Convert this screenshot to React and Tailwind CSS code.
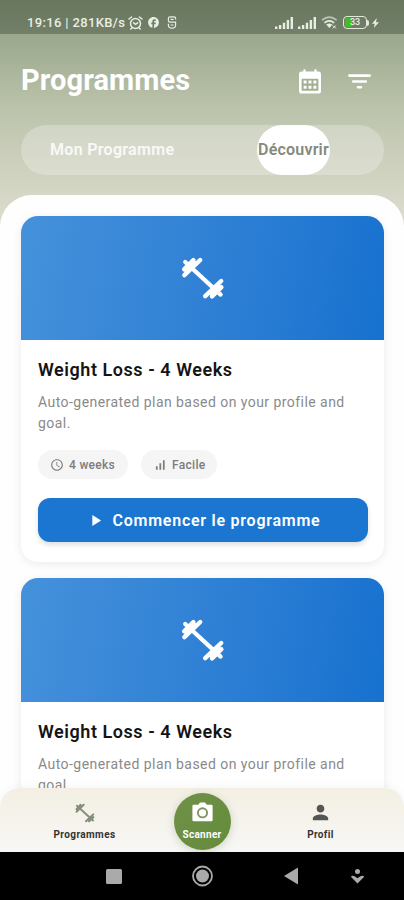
import { MdAccessTime, MdSignalCellularAlt, MdPlayArrow, MdPerson, MdFacebook } from "react-icons/md";

const PROGRAMS = [
  { id: 1, title: "Weight Loss - 4 Weeks", desc: "Auto-generated plan based on your profile and goal.", duration: "4 weeks", level: "Facile" },
  { id: 2, title: "Weight Loss - 4 Weeks", desc: "Auto-generated plan based on your profile and goal.", duration: "4 weeks", level: "Facile" },
];

function Dumbbell({ className }) {
  return (
    <svg viewBox="0 0 44 44" className={className} fill="none" stroke="currentColor" strokeLinecap="round" strokeWidth="4.4">
      <path d="M4.2 6 39.6 38.6" strokeWidth="4.2" />
      <path d="M3.2 13.4 12.4 4M3.4 19.2 19.2 4" />
      <path d="M31 40.4 40.4 31.2M24.2 40.2 40.2 25" />
      <path d="M4.5 13 12 5.5 16.5 6.5 6 17zM39 31.5 31.5 39 27 37.5 37.5 27.5z" fill="currentColor" strokeWidth="1.6" />
    </svg>
  );
}

function CalendarIcon({ className }) {
  return (
    <svg viewBox="0 0 22 25" className={className}>
      <path d="M5.5 1.5V5M16.5 1.5V5" stroke="currentColor" strokeWidth="2.4" strokeLinecap="round" />
      <rect y="2.6" width="22" height="22" rx="2.6" fill="currentColor" />
      <rect x="2.6" y="9.8" width="16.8" height="12" rx="1" fill="#a3ae92" />
      <g fill="currentColor">
        <path d="M4.6 11.4h3v3h-3zM9.5 11.4h3v3h-3zM14.4 11.4h3v3h-3zM4.6 16.8h3v3h-3zM9.5 16.8h3v3h-3zM14.4 16.8h3v3h-3z" />
      </g>
    </svg>
  );
}

function FilterIcon({ className }) {
  return (
    <svg viewBox="0 0 23 15" className={className} stroke="currentColor" strokeWidth="2.6" strokeLinecap="round">
      <path d="M1.4 1.6h20.2M5.2 7.5h12.6M10 13.2h3" />
    </svg>
  );
}

function CameraIcon({ className }) {
  return (
    <svg viewBox="0 0 21 20" className={className} fill="none">
      <path d="M1.6 2.8h4.6L8 .4h5l1.8 2.4h4.6q1.2 0 1.2 1.2v14q0 1.2-1.2 1.2H1.6Q.4 19.2.4 18V4q0-1.2 1.2-1.2z" fill="currentColor" />
      <circle cx="10.5" cy="10.8" r="4.6" stroke="#7d965c" strokeWidth="1.9" />
    </svg>
  );
}

function Signal() {
  return (
    <svg viewBox="0 0 18 12" className="h-3 w-[18px]" fill="currentColor">
      <path d="M0 9.5h2.4V12H0zM3.9 8h2.4v4H3.9zM7.8 5.8h2.4V12H7.8zM11.7 3h2.4v9h-2.4zM15.6 0H18v12h-2.4z" />
    </svg>
  );
}

function StatusBar() {
  return (
    <div className="flex h-[34px] items-center bg-linear-to-b from-[#69775f] to-[#737f68] pt-[11px] pr-[25px] pl-[27px] text-[#e9eee3]">
      <span className="w-[99px] text-[13px] font-medium tracking-[0.35px] whitespace-nowrap">19:16 | 281KB/s</span>
      <svg viewBox="0 0 15 14" className="ml-0.5 h-3.5 w-[15px]" fill="none" stroke="currentColor" strokeWidth="1.5" strokeLinecap="round">
        <circle cx="7.5" cy="7.5" r="5" />
        <path d="M1 3 3.6 1M14 3 11.4 1M5.6 6.8l2 1.6 2-1.6M3.8 12l-1 1M11.2 12l1 1" />
      </svg>
      <MdFacebook className="ml-1 size-[13px]" />
      <svg viewBox="0 0 10 13" className="ml-[7px] h-[13px] w-2.5" fill="none" stroke="currentColor" strokeWidth="1.2">
        <path d="M8.6 3.6V2.4Q8.6.8 6.8.8H3.2Q1.4.8 1.4 2.6v2q0 1.6 1.6 1.6h5.6V9q0 3.2-3.6 3.2T1.4 9V7.8M3.6 3.4h3M3.6 9h3" />
      </svg>
      <div className="ml-auto flex items-center">
        <Signal />
        <span className="ml-[5px] flex"><Signal /></span>
        <svg viewBox="0 0 17 13" className="ml-[5px] h-[13px] w-[17px]" fill="none" stroke="currentColor" strokeWidth="1.6">
          <path d="M1 4.2Q8.2-1.8 15.6 4.2" opacity=".65" />
          <path d="M3.4 6.8Q8.2 2.8 13.2 6.8" />
          <path d="M5.6 8.6 8.4 11.8 11 8.6Q8.3 7 5.6 8.6z" fill="currentColor" strokeWidth=".6" />
          <path d="M11.8 9.4l3 3M14.8 9.4l-3 3" strokeWidth="1" />
        </svg>
        <div className="relative ml-[5px] flex h-[13px] w-6 items-center justify-center overflow-hidden rounded-[4px] border-[1.5px] border-[#e3e9dc]">
          <span className="absolute inset-y-px left-px w-[7px] rounded-l-[2px] bg-[#43bd25]" />
          <span className="relative text-[9px] leading-none font-medium">33</span>
        </div>
        <span className="h-[6px] w-[2px] rounded-r bg-[#e3e9dc]" />
        <svg viewBox="0 0 7 10" className="ml-[3px] h-2.5 w-[7px]" fill="currentColor">
          <path d="M4.8 0 0 5.8h2.8L1.8 10 7 4.2H4z" />
        </svg>
      </div>
    </div>
  );
}

function ProgramCard({ program }) {
  return (
    <article className="shrink-0 overflow-hidden rounded-[17px] bg-white shadow-[0_2px_10px_rgba(0,0,0,0.08)]">
      <div className="flex h-[124px] items-center justify-center bg-linear-100 from-[#4591db] to-[#1671cf]">
        <Dumbbell className="size-11 text-white" />
      </div>
      <div className="pt-[18px] pr-4 pb-5 pl-[17px]">
        <h2 className="text-[18px] leading-6 font-semibold tracking-[0.55px] text-[#141414]">{program.title}</h2>
        <p className="mt-[10px] text-[14px] leading-[20.5px] tracking-[0.45px] text-[#8a8a8a]">{program.desc}</p>
        <div className="mt-[17px] flex gap-[13px]">
          <span className="flex h-[29px] w-[90px] items-center gap-[5px] rounded-full bg-[#f5f5f5] pl-[12px] text-[12px] font-medium tracking-[0.3px] whitespace-nowrap text-[#7c7c7c]">
            <MdAccessTime className="size-3.5 shrink-0" />
            {program.duration}
          </span>
          <span className="flex h-[29px] w-[76px] items-center gap-[5px] rounded-full bg-[#f5f5f5] pl-[12px] text-[12px] font-medium tracking-[0.3px] whitespace-nowrap text-[#7c7c7c]">
            <MdSignalCellularAlt className="size-3.5 shrink-0" />
            {program.level}
          </span>
        </div>
        <button className="mt-[19px] flex h-11 w-full items-center justify-center gap-2 rounded-xl bg-[#1b76d2] pt-px text-[16px] font-semibold tracking-[0.75px] text-white shadow-[0_3px_5px_rgba(0,0,0,0.13)]">
          <MdPlayArrow className="size-[19px]" />
          Commencer le programme
        </button>
      </div>
    </article>
  );
}

function BottomNav() {
  return (
    <nav className="flex h-16 shrink-0 justify-between rounded-t-[20px] bg-linear-to-b from-[#f3efe3] to-[#f7f7f5] px-[34px] text-[10px] font-bold text-[#333] shadow-[0_-2px_8px_rgba(0,0,0,0.04)]">
      <a className="flex w-[101px] flex-col items-center pt-[15px]">
        <Dumbbell className="size-5 text-[#85907a]" />
        <span className="mt-1 leading-[15px] tracking-[0.4px]">Programmes</span>
      </a>
      <a className="mt-[5px] flex size-[57px] flex-col items-center rounded-full bg-linear-to-br from-[#6f9147] to-[#668b3b] pt-[9px] text-white shadow-[0_2px_8px_rgba(60,80,30,0.2)]">
        <CameraIcon className="h-5 w-[21px]" />
        <span className="mt-[5px] leading-[15px] tracking-[0.3px]">Scanner</span>
      </a>
      <a className="flex w-[101px] flex-col items-center pt-[13px] pl-0.5">
        <MdPerson className="size-[23px] text-[#555]" />
        <span className="mt-[3px] leading-[15px] tracking-[0.35px]">Profil</span>
      </a>
    </nav>
  );
}

function SystemNav() {
  return (
    <div className="h-12 shrink-0 bg-black text-[#aaa]">
      <svg viewBox="0 0 404 48" className="h-12 w-[404px]" fill="currentColor">
        <rect x="106" y="17" width="16" height="15" rx="1.5" />
        <circle cx="202.5" cy="24" r="9.5" fill="none" stroke="currentColor" strokeWidth="1.8" />
        <circle cx="202.5" cy="24" r="6.5" />
        <path d="M298 15.5v17L284 24z" />
        <circle cx="357.5" cy="19.5" r="2.5" />
        <path d="M351 24.2q2-1.2 4 .4l2.5 1.6 2.5-1.6q2-1.6 4-.4.4.6-.6 1.4L357.5 31.4 351.6 25.6z" />
      </svg>
    </div>
  );
}

export default function App() {
  return (
    <div className="flex h-[900px] w-[404px] flex-col overflow-hidden bg-linear-to-b from-[#8b9b7e] from-0% via-[#bcc4ac] via-[110px] to-[#dfddcf] to-[225px] font-[Roboto,sans-serif]">
      <StatusBar />
      <header className="pr-5 pl-[21px]">
        <div className="flex h-[91px] items-center pt-[3px] pr-[13px]">
          <h1 className="text-[29px] font-bold tracking-[0.1px] text-white">Programmes</h1>
          <CalendarIcon className="ml-auto h-[25px] w-[22px] text-white" />
          <FilterIcon className="ml-[27px] h-[15px] w-[23px] text-white" />
        </div>
        <div className="flex h-[50px] items-center rounded-full bg-white/25 pl-[29px] text-[16px] font-semibold">
          <span className="w-[207px] tracking-[0.3px] text-white/85">Mon Programme</span>
          <span className="flex h-[50px] w-[73px] items-center justify-center rounded-[25px] bg-white tracking-[0.2px] text-[#858a7c]">Découvrir</span>
        </div>
      </header>
      <div className="mt-5 flex min-h-0 flex-1 flex-col overflow-hidden rounded-t-[32px] bg-[#fefefe]">
        <main className="flex min-h-0 flex-1 flex-col gap-4 overflow-hidden pt-[21px] pr-5 pl-[21px]">
          {PROGRAMS.map((program) => (
            <ProgramCard key={program.id} program={program} />
          ))}
        </main>
        <BottomNav />
      </div>
      <SystemNav />
    </div>
  );
}
